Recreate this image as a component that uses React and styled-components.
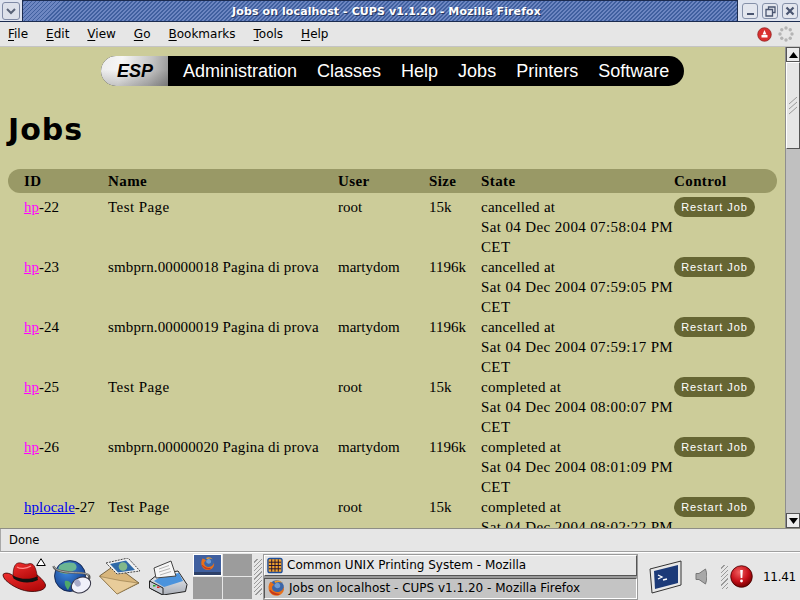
import React from "react";
import styled, { createGlobalStyle } from "styled-components";

const GlobalStyle = createGlobalStyle`
  html, body { margin: 0; padding: 0; width: 800px; height: 600px; overflow: hidden; background: #e6e6e6; }
  #root { width: 800px; height: 600px; }
`;

const Screen = styled.div`
  width: 800px;
  height: 600px;
  display: flex;
  flex-direction: column;
  font-family: "DejaVu Sans", sans-serif;
  font-size: 12px;
  color: #000;
  background: #e6e6e6;
  overflow: hidden;
`;

const TitleBar = styled.div`
  height: 22px;
  flex: none;
  display: flex;
  align-items: stretch;
  background: #dfe4ef;
  box-sizing: border-box;
  border-bottom: 1px solid #1c2c50;
`;

const MenuBox = styled.div`
  width: 18px;
  margin: 2px 2px 1px 2px;
  box-sizing: border-box;
  border: 1px solid #7f8aa5;
  border-radius: 3px;
  background: #dde1ea;
  display: flex;
  align-items: center;
  justify-content: center;
`;

const TitleStrip = styled.div`
  flex: 1;
  display: flex;
  align-items: center;
  justify-content: center;
  border-left: 1px solid #1c2c50;
  border-right: 1px solid #1c2c50;
  border-top: 1px solid #1c2c50;
  background: repeating-linear-gradient(135deg, #40609f 0 1.4px, #6d86c1 1.4px 2.83px);
  color: #fff;
  font-weight: bold;
  font-size: 11px;
  letter-spacing: 0.1px;
  padding-left: 13px;
  text-shadow: 1px 1px 0 #26375f;
`;

const WinButtons = styled.div`
  width: 62px;
  flex: none;
  display: flex;
  align-items: center;
  gap: 4px;
  padding: 2px 0 1px 4px;
  box-sizing: border-box;
`;

const WinButton = styled.div`
  width: 16px;
  height: 16px;
  box-sizing: border-box;
  border: 1px solid #8590a8;
  border-radius: 3px;
  background: #e3e6ee;
  display: flex;
  align-items: center;
  justify-content: center;
`;

const MenuBar = styled.div`
  height: 25px;
  flex: none;
  display: flex;
  align-items: center;
  padding: 0 8px;
  gap: 18px;
  background: #e6e6e6;
  border-bottom: 1px solid #c4c4c4;
  box-sizing: border-box;
`;

const MenuItem = styled.span`
  font-size: 12px;
  color: #000;
  u { text-decoration: underline; text-underline-offset: 2px; }
`;

const MenuIcons = styled.div`
  margin-left: auto;
  display: flex;
  align-items: center;
  gap: 6px;
  margin-right: -2px;
`;

const Viewport = styled.div`
  height: 482px;
  flex: none;
  display: flex;
  background: #cccc99;
  border-bottom: 1px solid #8e8e86;
  box-sizing: border-box;
`;

const Page = styled.div`
  flex: 1;
  height: 481px;
  overflow: hidden;
  padding: 9px 8px 0;
  box-sizing: border-box;
`;

const Nav = styled.div`
  display: flex;
  width: 583px;
  height: 30px;
  margin-left: 93px;
  font-family: "Liberation Sans", Arial, sans-serif;
  font-size: 18px;
  color: #fff;
  background: #000;
  border-radius: 15px;
  overflow: hidden;
`;

const Logo = styled.div`
  width: 67px;
  display: flex;
  align-items: center;
  justify-content: center;
  padding-left: 1px;
  box-sizing: border-box;
  background:
    linear-gradient(rgba(0, 0, 0, 0) 45%, rgba(0, 0, 0, 0.2)),
    linear-gradient(100deg, #ececec, #f6f6f6 30%, #c4c4c4 72%, #949494);
  color: #000;
  font-weight: bold;
  font-style: italic;
  font-size: 18px;
`;

const NavLinks = styled.div`
  display: flex;
  align-items: center;
  gap: 20px;
  padding-left: 15px;
`;

const Heading = styled.h1`
  margin: 24px 0 0;
  height: 59px;
  font-family: "DejaVu Sans", sans-serif;
  font-weight: bold;
  font-size: 30px;
  letter-spacing: 1px;
  line-height: 39px;
  color: #000;
`;

const Row = styled.div`
  display: grid;
  grid-template-columns: 84px 230px 91px 52px 193px 95px;
  padding-left: 16px;
  font-family: "Liberation Serif", "Times New Roman", serif;
  font-size: 15px;
  line-height: 20px;
  color: #000;
  width: 769px;
  box-sizing: border-box;
`;

const HeadRow = styled(Row)`
  height: 24px;
  align-items: center;
  background: #999966;
  border-radius: 12px;
  font-weight: bold;
  letter-spacing: 0.4px;
  margin-bottom: 4px;
`;

const JobRow = styled(Row)`
  height: 60px;
  align-items: start;
`;

const NameCell = styled.span`
  letter-spacing: ${(p) => (p.$long ? "0.13px" : "0.44px")};
`;

const StateCell = styled.span`
  letter-spacing: 0.25px;
`;

const DateText = styled.span`
  letter-spacing: 0.37px;
`;

const PrinterLink = styled.a`
  text-decoration: underline;
  color: ${(p) => (p.$visited ? "#ff00ff" : "#0000ee")};
`;

const RestartButton = styled.div`
  width: 81px;
  height: 20px;
  border-radius: 10px;
  background: #666633;
  color: #fff;
  font-family: "Liberation Sans", Arial, sans-serif;
  font-size: 11px;
  letter-spacing: 0.95px;
  line-height: 20px;
  text-align: center;
`;

const ScrollBar = styled.div`
  width: 15px;
  flex: none;
  display: flex;
  flex-direction: column;
  background: #c0c0c0;
  border-left: 1px solid #8e8e8e;
  box-sizing: border-box;
`;

const ScrollArrow = styled.div`
  height: 15px;
  flex: none;
  box-sizing: border-box;
  border: 1px solid #555;
  background: #ededed;
  display: flex;
  align-items: center;
  justify-content: center;
`;

const ScrollThumb = styled.div`
  height: 87px;
  flex: none;
  box-sizing: border-box;
  border: 1px solid #555;
  border-top-color: #fff;
  border-left-color: #fff;
  background: #e6e6e6;
  display: flex;
  align-items: center;
  justify-content: center;
`;

const ScrollTrack = styled.div`
  flex: 1;
`;

const StatusBar = styled.div`
  height: 23px;
  flex: none;
  display: flex;
  align-items: center;
  padding-left: 8px;
  box-sizing: border-box;
  border-left: 1px solid #a8a8a8;
  border-bottom: 1px solid #a0a0a0;
  font-size: 11.6px;
  background: #e6e6e6;
`;

const Panel = styled.div`
  height: 48px;
  flex: none;
  display: flex;
  align-items: center;
  background: #e6e6e6;
  border-top: 1px solid #fff;
  box-sizing: border-box;
  position: relative;
`;

const Launchers = styled.div`
  display: flex;
  align-items: center;
  width: 193px;
  flex: none;
`;

const Launcher = styled.div`
  width: ${(p) => p.$w}px;
  height: 44px;
  display: flex;
  align-items: center;
  justify-content: center;
  flex: none;
  position: relative;
`;

const Badge = styled.svg`
  position: absolute;
  left: 36px;
  top: 3px;
`;

const Pager = styled.div`
  width: 59px;
  height: 45px;
  flex: none;
  display: grid;
  grid-template-columns: 1fr 1fr;
  grid-template-rows: 1fr 1fr;
  gap: 1px;
  background: #e6e6e6;
  box-sizing: border-box;
`;

const PagerCell = styled.div`
  background: #9c9c9c;
  overflow: hidden;
`;

const ActiveDesk = styled.div`
  height: 100%;
  box-sizing: border-box;
  border: 1px solid #fff;
  background: linear-gradient(#3f5f9f 0 17px, #2d4068 17px);
  display: flex;
  justify-content: center;
  padding-top: 1px;
`;

const Grip = styled.div`
  width: ${(p) => p.$w || 8}px;
  height: ${(p) => p.$h || 36}px;
  margin: 0 2px;
  flex: none;
  background: repeating-linear-gradient(135deg, transparent 0 2px, #9a9a9a 2px 3px);
`;

const TaskList = styled.div`
  width: 373px;
  flex: none;
  display: flex;
  flex-direction: column;
  gap: 2px;
`;

const TaskButton = styled.div`
  height: 21px;
  display: flex;
  align-items: center;
  gap: 4px;
  padding-left: 2px;
  box-sizing: border-box;
  border: 1px solid;
  border-color: ${(p) => (p.$active ? "#555 #fff #fff #555" : "#fff #555 #555 #fff")};
  outline: 1px solid #9a9a9a;
  background: ${(p) => (p.$active ? "#c4c4c4" : "#e6e6e6")};
  font-size: 12px;
  white-space: nowrap;
`;

const Tray = styled.div`
  margin-left: 12px;
  display: flex;
  align-items: center;
  flex: 1;
`;

const Speaker = styled.div`
  margin: 0 12px;
  display: flex;
`;

const Clock = styled.span`
  font-size: 12px;
  letter-spacing: -0.3px;
  margin-left: 10px;
`;

const jobs = [
  { id: 22, name: "Test Page", user: "root", size: "15k", state: "cancelled", at: "Sat 04 Dec 2004 07:58:04 PM CET" },
  { id: 23, name: "smbprn.00000018 Pagina di prova", user: "martydom", size: "1196k", state: "cancelled", at: "Sat 04 Dec 2004 07:59:05 PM CET" },
  { id: 24, name: "smbprn.00000019 Pagina di prova", user: "martydom", size: "1196k", state: "cancelled", at: "Sat 04 Dec 2004 07:59:17 PM CET" },
  { id: 25, name: "Test Page", user: "root", size: "15k", state: "completed", at: "Sat 04 Dec 2004 08:00:07 PM CET" },
  { id: 26, name: "smbprn.00000020 Pagina di prova", user: "martydom", size: "1196k", state: "completed", at: "Sat 04 Dec 2004 08:01:09 PM CET" },
  { id: 27, printer: "hplocale", name: "Test Page", user: "root", size: "15k", state: "completed", at: "Sat 04 Dec 2004 08:02:22 PM CET" },
];

const FirefoxIcon = ({ size = 16 }) => (
  <svg width={size} height={size} viewBox="0 0 16 16">
    <circle cx="8.500" cy="7.500" r="6.500" fill="#3c66a8" />
    <path d="M9 3c2 .5 3 2 2.800 3.500-.3 1.500-2 2-3.500 1.500S6 6 7 4.500z" fill="#6f9ad0" />
    <path d="M3 2.500C1 5 .8 9 2.500 11.800 4.500 15 9 16 12.200 13.800 14.500 12.200 15.500 9.500 15 6.800 14.500 9 13 11 10.500 11.500 7.500 12.200 4.800 10.500 4.500 8 4.300 6.500 5.300 5.500 6.500 5 5.500 4.500 4.800 4 4.700 3 4.200 3.300 3.500 3.300 3 2.500z" fill="#e8701a" />
    <path d="M2.500 10c1.500 3 5 4.500 8.500 3.500-3 .2-6-1-8.500-3.500z" fill="#c6381a" stroke="#c6381a" />
    <path d="M6.500 2C9 .8 12 1.500 13.500 3.500 11.500 2.500 9 2.500 7.500 3.500z" fill="#f09a2a" />
  </svg>
);

const RedHat = () => (
  <svg width="44" height="30" viewBox="0 0 44 30">
    <defs>
      <linearGradient id="hatRed" x1="0" y1="0" x2="0.6" y2="1">
        <stop offset="0" stopColor="#f03030" />
        <stop offset="1" stopColor="#b40a0a" />
      </linearGradient>
    </defs>
    <path d="M1 12.500C4 9.500 9 12 12 14L35 13C38 15 43 20 43.500 23 44 28 36 29.500 30 29.500 20 29.500 10 24 4 18.500 2 16.500 1 14.500 1 12.500z" fill="url(#hatRed)" stroke="#300" strokeWidth="0.800" />
    <path d="M11 15C11 8 12 2 16 1c4-1 6 2 10 1 5-2 8 2 9.500 14C28 20 18 19 11 15z" fill="url(#hatRed)" stroke="#300" strokeWidth="0.600" />
    <path d="M11 13.500C18 17.500 28 18 35 14.500l1 3.500C28 22 18 21 11.500 16.500z" fill="#111" />
    <path d="M15 5c3 2 9 2 14-1" stroke="#ff8a8a" strokeWidth="1.300" fill="none" />
  </svg>
);

const GlobeMouse = () => (
  <svg width="40" height="35" viewBox="0 0 40 35">
    <defs>
      <radialGradient id="globeBlue" cx="40%" cy="35%" r="70%">
        <stop offset="0" stopColor="#3f8ae0" />
        <stop offset="1" stopColor="#123a88" />
      </radialGradient>
    </defs>
    <circle cx="18" cy="17" r="15.500" fill="url(#globeBlue)" stroke="#0c1c40" strokeWidth="0.800" />
    <path d="M8 6c5-3 10-3 14-2 3 2 3 4 2 6s-5 2-7 4-6 0-8 0-4-5-1-8z" fill="#6bb592" />
    <path d="M13 22c2-1 5 0 6 3l-3 6c-2-2-4-6-3-9z" fill="#4fa86a" />
    <path d="M1.500 7C2 11 10 13 20 13.500c7 .5 15 0 17 3 1 2 0 4-1.500 5.500" stroke="#555" strokeWidth="2.200" fill="none" />
    <path d="M1.500 6.500C2 11 10 13 20 13.500c7 .5 15 0 17 3" stroke="#ccc" strokeWidth="0.700" fill="none" />
    <ellipse cx="29" cy="26" rx="10" ry="7.500" transform="rotate(-25 29 26)" fill="#f0f0fa" stroke="#334" />
    <ellipse cx="25.500" cy="24" rx="3" ry="3.800" transform="rotate(-30 25.500 24)" fill="#a8aac8" />
  </svg>
);

const MailPhoto = () => (
  <svg width="42" height="37" viewBox="0 0 42 37">
    <path d="M0.500 18L16 7l24 18-22 11z" fill="#d8b67c" stroke="#5e4a26" strokeWidth="0.800" />
    <path d="M1 18.500l20 4 18 2.500-21 11z" fill="#e8cc9a" stroke="#8d7344" strokeWidth="0.600" />
    <path d="M7 5l22-5 12 13-23 3z" fill="#f2f2f2" stroke="#444" strokeDasharray="2 1" />
    <path d="M11 6l16-3.500 9 9.500-17 2.500z" fill="#2f6aa8" />
    <circle cx="24" cy="8.500" r="4.300" fill="#82b88a" />
  </svg>
);

const PrinterIcon = () => (
  <svg width="39" height="36" viewBox="0 0 39 36">
    <defs>
      <linearGradient id="printBody" x1="0" y1="0" x2="0" y2="1">
        <stop offset="0" stopColor="#f2f4f8" />
        <stop offset="1" stopColor="#a8adb6" />
      </linearGradient>
    </defs>
    <path d="M0.500 22L9 15l20-3 9 13.500-1.500 7L14 36 .5 29z" fill="url(#printBody)" stroke="#222" />
    <path d="M5 22l8-5 17-3 4 8-19 6z" fill="#4b93dc" />
    <path d="M5 9l17-7 5 15-20 2z" fill="#f6f6f6" stroke="#444" />
    <path d="M10 10l10-3.500M10 13l11-3.500M11 16l11-3.500" stroke="#b4b4b4" />
    <path d="M0.500 22L14 29v7L.5 29z" fill="#c4c8d0" stroke="#222" />
    <rect x="4" y="26" width="2.500" height="1.500" fill="#2a2" />
    <rect x="8" y="27.500" width="2.500" height="1.500" fill="#d22" />
  </svg>
);

const MozillaIcon = () => (
  <svg width="16" height="17" viewBox="0 0 17 17">
    <rect x="1" y="1" width="15" height="15" rx="2" fill="#f3a22c" stroke="#1f4f9a" strokeWidth="1.500" />
    <path d="M2 5h13M2 8.500h13M2 12h13M5 2v13M8.500 2v13M12 2v13" stroke="#201030" strokeWidth="1" />
  </svg>
);

const TerminalIcon = () => (
  <svg width="34" height="34" viewBox="0 0 34 34">
    <path d="M1 9L32 1v24L3 33z" fill="#e8e8e8" stroke="#333" />
    <path d="M5 11l24-6v18L6 29z" fill="#1c3a78" />
    <path d="M9 15l4 2-4 2M14 20l4-1" stroke="#fff" strokeWidth="1.300" fill="none" />
  </svg>
);

const SpeakerIcon = () => (
  <svg width="12" height="17" viewBox="0 0 12 17">
    <path d="M1 5.500h3L10.500 1c1.800 5 1.800 10 0 15L4 11.500H1z" fill="#a8a8a8" stroke="#777" />
  </svg>
);

const AlertIcon = () => (
  <svg width="23" height="23" viewBox="0 0 23 23">
    <defs>
      <radialGradient id="ballRed" cx="40%" cy="30%" r="70%">
        <stop offset="0" stopColor="#f06060" />
        <stop offset="0.6" stopColor="#c8101a" />
        <stop offset="1" stopColor="#700" />
      </radialGradient>
    </defs>
    <circle cx="11.500" cy="11.500" r="10.800" fill="url(#ballRed)" stroke="#400" strokeWidth="0.800" />
    <path d="M10.200 5h2.600l-.5 8h-1.600z" fill="#fff" />
    <circle cx="11.500" cy="16" r="1.400" fill="#fff" />
  </svg>
);

const StopIcon = () => (
  <svg width="15" height="15" viewBox="0 0 15 15">
    <circle cx="7.500" cy="7.500" r="6.800" fill="#d9302f" stroke="#8a1a1a" strokeWidth="0.700" />
    <path d="M7.500 3l2 4.500h-4z" fill="#fff" />
    <rect x="4.500" y="8" width="6" height="2.500" fill="#fff" />
  </svg>
);

const Throbber = () => (
  <svg width="16" height="16" viewBox="0 0 16 16">
    {[0, 45, 90, 135, 180, 225, 270, 315].map((a) => (
      <circle
        key={a}
        cx={8 + 6 * Math.cos((a * Math.PI) / 180)}
        cy={8 + 6 * Math.sin((a * Math.PI) / 180)}
        r="1.700"
        fill="#b4b4b4"
      />
    ))}
  </svg>
);

const Chevron = () => (
  <svg width="12" height="8" viewBox="0 0 12 8">
    <path d="M2 2l4 4 4-4" stroke="#5a6478" strokeWidth="2" fill="none" />
  </svg>
);

const Arrow = ({ down }) => (
  <svg width="9" height="6" viewBox="0 0 9 6">
    <path d={down ? "M0 0h9L4.500 6z" : "M0 6h9L4.500 0z"} fill="#000" />
  </svg>
);

const ThumbGrip = () => (
  <svg width="9" height="18" viewBox="0 0 9 18">
    <path d="M0 7l8-7M0 12l8-7M0 17l8-7" stroke="#999" />
  </svg>
);

const menus = [
  ["F", "ile"], ["E", "dit"], ["V", "iew"], ["G", "o"], ["B", "ookmarks"], ["T", "ools"], ["H", "elp"],
];

export default function App() {
  return (
    <Screen>
      <GlobalStyle />
      <TitleBar>
        <MenuBox><Chevron /></MenuBox>
        <TitleStrip>Jobs on localhost - CUPS v1.1.20 - Mozilla Firefox</TitleStrip>
        <WinButtons>
          <WinButton>
            <svg width="9" height="9" viewBox="0 0 9 9"><rect x="1" y="6" width="7" height="2" fill="#4a5570" /></svg>
          </WinButton>
          <WinButton>
            <svg width="11" height="11" viewBox="0 0 11 11"><path d="M3.500 3V1h6.500v5.500H8M1 3.500h6.500V10H1z" fill="none" stroke="#4a5570" strokeWidth="1.300" /></svg>
          </WinButton>
          <WinButton>
            <svg width="10" height="10" viewBox="0 0 10 10"><path d="M1.500 1.500l7 7M8.500 1.500l-7 7" stroke="#4a5570" strokeWidth="2.200" /></svg>
          </WinButton>
        </WinButtons>
      </TitleBar>
      <MenuBar>
        {menus.map(([k, rest]) => (
          <MenuItem key={k}><u>{k}</u>{rest}</MenuItem>
        ))}
        <MenuIcons>
          <StopIcon />
          <Throbber />
        </MenuIcons>
      </MenuBar>
      <Viewport>
        <Page>
          <Nav>
            <Logo>ESP</Logo>
            <NavLinks>
              <span>Administration</span>
              <span>Classes</span>
              <span>Help</span>
              <span>Jobs</span>
              <span>Printers</span>
              <span>Software</span>
            </NavLinks>
          </Nav>
          <Heading>Jobs</Heading>
          <HeadRow>
            <span>ID</span><span>Name</span><span>User</span><span>Size</span><span>State</span><span>Control</span>
          </HeadRow>
          {jobs.map((j) => (
            <JobRow key={j.id}>
              <span>
                <PrinterLink $visited={!j.printer}>{j.printer || "hp"}</PrinterLink>-{j.id}
              </span>
              <NameCell $long={j.name.length > 10}>{j.name}</NameCell>
              <span>{j.user}</span>
              <span>{j.size}</span>
              <StateCell>{j.state} at<br /><DateText>{j.at}</DateText></StateCell>
              <RestartButton>Restart Job</RestartButton>
            </JobRow>
          ))}
        </Page>
        <ScrollBar>
          <ScrollArrow><Arrow /></ScrollArrow>
          <ScrollThumb><ThumbGrip /></ScrollThumb>
          <ScrollTrack />
          <ScrollArrow><Arrow down /></ScrollArrow>
        </ScrollBar>
      </Viewport>
      <StatusBar>Done</StatusBar>
      <Panel>
        <Launchers>
          <Launcher $w={48}>
            <RedHat />
            <Badge width="10" height="8" viewBox="0 0 10 8"><path d="M5 .7L9.300 7.500H.7z" fill="#fff" stroke="#000" /></Badge>
          </Launcher>
          <Launcher $w={47}><GlobeMouse /></Launcher>
          <Launcher $w={49}><MailPhoto /></Launcher>
          <Launcher $w={49}><PrinterIcon /></Launcher>
        </Launchers>
        <Pager>
          <PagerCell><ActiveDesk><FirefoxIcon size={15} /></ActiveDesk></PagerCell>
          <PagerCell />
          <PagerCell />
          <PagerCell />
        </Pager>
        <Grip />
        <TaskList>
          <TaskButton><MozillaIcon />Common UNIX Printing System - Mozilla</TaskButton>
          <TaskButton $active><FirefoxIcon size={18} />Jobs on localhost - CUPS v1.1.20 - Mozilla Firefox</TaskButton>
        </TaskList>
        <Tray>
          <TerminalIcon />
          <Speaker><SpeakerIcon /></Speaker>
          <Grip $w={7} $h={24} />
          <AlertIcon />
          <Clock>11.41</Clock>
        </Tray>
      </Panel>
    </Screen>
  );
}
